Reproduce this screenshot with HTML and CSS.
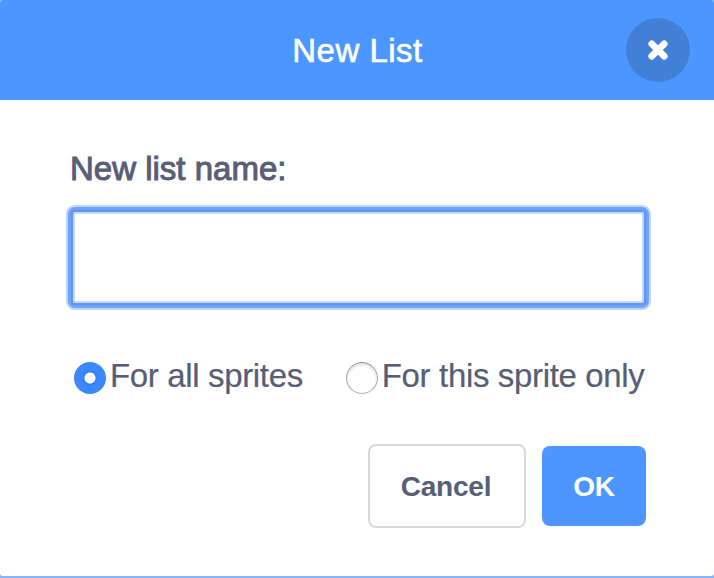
FILE: index.html
```html
<!DOCTYPE html>
<html lang="en">
<head>
<meta charset="utf-8">
<title>New List</title>
<link rel="stylesheet" href="styles.css">
</head>
<body>
<main class="modal" role="dialog" aria-labelledby="title">
  <header class="header">
    <h1 class="title" id="title">New List</h1>
    <button class="close" aria-label="Close">
      <svg width="20" height="20" viewBox="0 0 20 20"><path d="M3.8 3.8 16.2 16.2M16.2 3.8 3.8 16.2"/></svg>
    </button>
  </header>
  <form class="body">
    <label class="label" for="name">New list name:</label>
    <input class="name" id="name" type="text">
    <div class="options">
      <label class="option"><input class="radio" type="radio" name="scope" checked><span>For all sprites</span></label>
      <label class="option"><input class="radio" type="radio" name="scope"><span>For this sprite only</span></label>
    </div>
    <div class="actions">
      <button class="button cancel" type="button">Cancel</button>
      <button class="button ok" type="button">OK</button>
    </div>
  </form>
</main>
</body>
</html>
```
FILE: styles.css
```css
* { box-sizing: border-box; }
body {
  margin: 0;
  background: #84b4fc;
  color: #575e75;
  font-family: "Liberation Sans", Arial, sans-serif;
}
.modal {
  height: 576px;
  background: #fff;
  border-radius: 3px;
  overflow: hidden;
}
.header {
  display: grid;
  grid-template-columns: 88px 1fr 88px;
  align-items: center;
  height: 100px;
  background: #4c97ff;
}
.title {
  grid-column: 2;
  margin: 0;
  padding: 1px 0 0 1px;
  color: #fff;
  font-size: 33px;
  font-weight: 400;
  letter-spacing: 0.5px;
  text-align: center;
  -webkit-text-stroke: 0.6px #fff;
}
.close {
  display: grid;
  place-items: center;
  width: 64px;
  height: 64px;
  padding: 0;
  border: 0;
  border-radius: 50%;
  background: #4280d7;
}
.close path {
  fill: none;
  stroke: #fff;
  stroke-width: 6.8;
  stroke-linecap: round;
}
.body { padding: 50px 68px 0; }
.label {
  display: block;
  height: 60px;
  padding-left: 2px;
  font-size: 33px;
  line-height: 38px;
  -webkit-text-stroke: 1px #575e75;
}
.name {
  display: block;
  width: 575px;
  height: 95px;
  margin-left: 3px;
  padding: 0 20px;
  border: 2px solid #6594eb;
  border-radius: 4px;
  outline: 0;
  color: #575e75;
  font: 32px "Liberation Sans", Arial, sans-serif;
  box-shadow: 0 0 0 3px #70a2fb, 0 0 0 5px #bdd6fe, inset 0 0 0 2px #c3d8fb;
}
.options {
  display: flex;
  gap: 43px;
  margin-top: 49px;
  padding-left: 6px;
}
.option {
  display: flex;
  height: 40px;
  font-size: 33px;
  line-height: 43px;
  letter-spacing: -0.35px;
  white-space: nowrap;
  -webkit-text-stroke: 0.2px #575e75;
}
.radio {
  appearance: none;
  width: 32px;
  height: 32px;
  margin: 8px 4px 0 0;
  border: 1px solid #aaa;
  border-top-color: #929292;
  border-bottom-color: #b8b8b8;
  border-radius: 50%;
  background: #fff;
  box-shadow: inset 0 2px 3px #ddd;
}
.radio:checked {
  border: 0;
  background: radial-gradient(circle, #fff 5px, #347cee 6px, #3b88fd 9px);
  box-shadow: none;
}
.actions {
  display: flex;
  align-items: center;
  justify-content: flex-end;
  gap: 16px;
  margin-top: 50px;
}
.button {
  padding: 2px 0 0;
  border: 0;
  border-radius: 8px;
  font: bold 28px "Liberation Sans", Arial, sans-serif;
  letter-spacing: -0.2px;
}
.cancel {
  width: 158px;
  height: 84px;
  padding-right: 2px;
  border: 2px solid #d9d9d9;
  background: #fff;
  color: #575e75;
}
.ok {
  width: 104px;
  height: 80px;
  background: #4c97ff;
  color: #fff;
}
```
